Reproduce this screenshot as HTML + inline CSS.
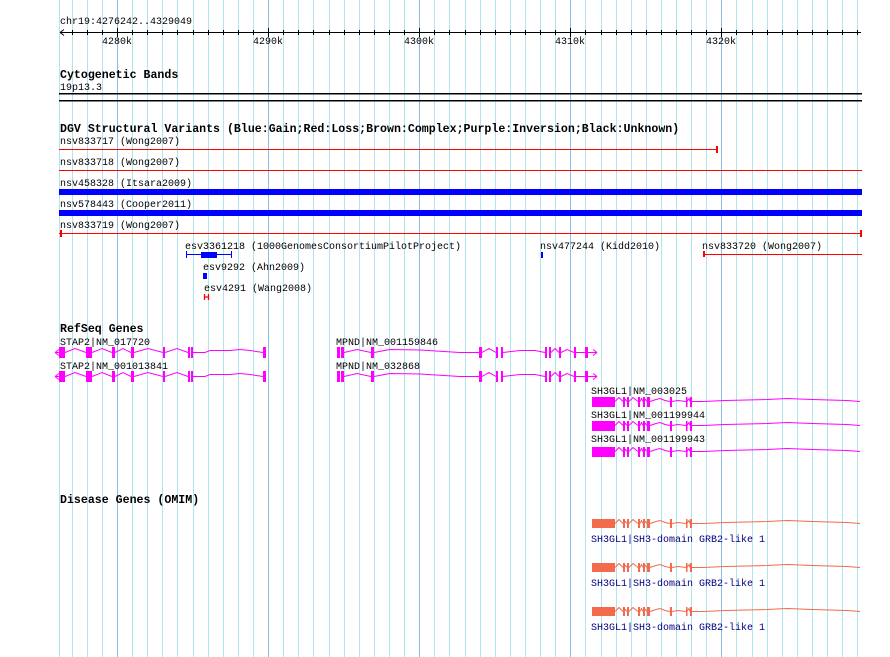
<!DOCTYPE html>
<html><head><meta charset="utf-8"><style>
html,body{margin:0;padding:0;background:#fff;}
svg{display:block}
text{font-family:"Liberation Mono",monospace;font-size:10px;fill:#000}
.b{font-weight:bold;font-size:11.6px}
.n{fill:#000080}
</style></head><body>
<svg width="890" height="657" viewBox="0 0 890 657" xmlns="http://www.w3.org/2000/svg">
<g stroke="#aee6ee" stroke-width="1">
<path d="M59.5 0V657M72.5 0V657M87.5 0V657M102.5 0V657M132.5 0V657M147.5 0V657M162.5 0V657M177.5 0V657M193.5 0V657M208.5 0V657M223.5 0V657M238.5 0V657M253.5 0V657M283.5 0V657M298.5 0V657M313.5 0V657M329.5 0V657M344.5 0V657M359.5 0V657M374.5 0V657M389.5 0V657M404.5 0V657M434.5 0V657M449.5 0V657M465.5 0V657M480.5 0V657M495.5 0V657M510.5 0V657M525.5 0V657M540.5 0V657M555.5 0V657M585.5 0V657M601.5 0V657M616.5 0V657M631.5 0V657M646.5 0V657M661.5 0V657M676.5 0V657M691.5 0V657M706.5 0V657M736.5 0V657M752.5 0V657M767.5 0V657M782.5 0V657M797.5 0V657M812.5 0V657M827.5 0V657M842.5 0V657M857.5 0V657"/>
</g>
<g stroke="#8cbde6" stroke-width="1"><path d="M117.5 0V657M268.5 0V657M419.5 0V657M570.5 0V657M721.5 0V657"/></g>

<text x="60" y="24">chr19:4276242..4329049</text>
<g stroke="#000" stroke-width="1" fill="none">
<path d="M60 32.5H861M60 32.5l4-3M60 32.5l4 3"/>
<path d="M72.5 30V35M87.5 30V35M102.5 30V35M117.5 28V37M132.5 30V35M147.5 30V35M162.5 30V35M177.5 30V35M193.5 30V35M208.5 30V35M223.5 30V35M238.5 30V35M253.5 30V35M268.5 28V37M283.5 30V35M298.5 30V35M313.5 30V35M329.5 30V35M344.5 30V35M359.5 30V35M374.5 30V35M389.5 30V35M404.5 30V35M419.5 28V37M434.5 30V35M449.5 30V35M465.5 30V35M480.5 30V35M495.5 30V35M510.5 30V35M525.5 30V35M540.5 30V35M555.5 30V35M570.5 28V37M585.5 30V35M601.5 30V35M616.5 30V35M631.5 30V35M646.5 30V35M661.5 30V35M676.5 30V35M691.5 30V35M706.5 30V35M721.5 28V37M736.5 30V35M752.5 30V35M767.5 30V35M782.5 30V35M797.5 30V35M812.5 30V35M827.5 30V35M842.5 30V35M857.5 30V35"/>
</g>
<text x="102" y="44">4280k</text><text x="253" y="44">4290k</text><text x="404" y="44">4300k</text><text x="555" y="44">4310k</text><text x="706" y="44">4320k</text>

<text x="60" y="78" class="b">Cytogenetic Bands</text>
<text x="60" y="90">19p13.3</text>
<rect x="59" y="93" width="803" height="1.5" fill="#000"/>
<rect x="59" y="100" width="803" height="1.5" fill="#000"/>

<text x="60" y="132" class="b">DGV Structural Variants (Blue:Gain;Red:Loss;Brown:Complex;Purple:Inversion;Black:Unknown)</text>
<text x="60" y="144">nsv833717 (Wong2007)</text>
<rect x="59" y="149" width="659" height="1" fill="#f00"/><rect x="716" y="146" width="2" height="7" fill="#f00"/>
<text x="60" y="165">nsv833718 (Wong2007)</text>
<rect x="59" y="170" width="803" height="1" fill="#f00"/>
<text x="60" y="186">nsv458328 (Itsara2009)</text>
<rect x="59" y="189" width="803" height="6" fill="#00f"/>
<text x="60" y="207">nsv578443 (Cooper2011)</text>
<rect x="59" y="210" width="803" height="6" fill="#00f"/>
<text x="60" y="228">nsv833719 (Wong2007)</text>
<rect x="59" y="233" width="803" height="1" fill="#f00"/><rect x="60" y="230" width="2" height="7" fill="#f00"/><rect x="860" y="230" width="2" height="7" fill="#f00"/>
<text x="185" y="249">esv3361218 (1000GenomesConsortiumPilotProject)</text>
<rect x="186" y="254" width="46" height="1" fill="#00f"/><rect x="186" y="251" width="1" height="7" fill="#00f"/><rect x="231" y="251" width="1" height="7" fill="#00f"/><rect x="201" y="252" width="16" height="6" fill="#00f"/>
<text x="540" y="249">nsv477244 (Kidd2010)</text>
<rect x="541" y="252" width="2" height="6" fill="#00f"/>
<text x="702" y="249">nsv833720 (Wong2007)</text>
<rect x="703" y="254" width="159" height="1" fill="#f00"/><rect x="703" y="251" width="2" height="6" fill="#f00"/>
<text x="203" y="270">esv9292 (Ahn2009)</text>
<rect x="203" y="273" width="4" height="6" fill="#00f"/>
<text x="204" y="291">esv4291 (Wang2008)</text>
<path d="M204.5 294V300M208.5 294V300M204 297H209" stroke="#f00" stroke-width="1.3"/>

<text x="60" y="332" class="b">RefSeq Genes</text>
<g fill="#f0f" stroke="#f0f">
<text x="60" y="345" style="fill:#000;stroke:none">STAP2|NM_017720</text>
<text x="60" y="369" style="fill:#000;stroke:none">STAP2|NM_001013841</text>
<g id="stap">
<path fill="none" stroke-width="1" d="M55 352.5l4-3M55 352.5l4 3M55 352.5H59M65 352.5L75 348.5L86 352.5M92 352.5L102 348.5L112 352.5M115 352.5L123 348.5L131 352.5M134 352.5L148 348.5L163 352.5M165 352.5L177 348.5L188 352.5M193 352.5L205 352.5L210 350.5L230 350.5L240 349.5L250 350.5L263 352.5"/>
<rect x="59" y="347" width="6" height="11" stroke="none"/><rect x="86" y="347" width="6" height="11" stroke="none"/><rect x="112" y="347" width="3" height="11" stroke="none"/><rect x="131" y="347" width="3" height="11" stroke="none"/><rect x="163" y="347" width="2" height="11" stroke="none"/><rect x="188" y="347" width="2" height="11" stroke="none"/><rect x="191" y="347" width="2" height="11" stroke="none"/><rect x="263" y="347" width="3" height="11" stroke="none"/>
</g>
<use href="#stap" y="24"/>
<text x="336" y="345" style="fill:#000;stroke:none">MPND|NM_001159846</text>
<text x="336" y="369" style="fill:#000;stroke:none">MPND|NM_032868</text>
<g id="mpnd">
<path fill="none" d="M344 352.5L357 349.5L371 352.5M374 352.5L390 349.5L420 350L460 352.5L479 352.5M482 352.5L489 348.5L496 352.5M503 352.5L520 350.5L535 350.5L545 352.5M551 352.5L555 348.5L559 352.5M561 352.5L567 349.5L574 352.5M576 352.5L585 352.5M588 352.5H597M597 352.5l-4-3M597 352.5l-4 3"/>
<rect x="337" y="347" width="3" height="11" stroke="none"/><rect x="341" y="347" width="3" height="11" stroke="none"/><rect x="371" y="347" width="3" height="11" stroke="none"/><rect x="479" y="347" width="3" height="11" stroke="none"/><rect x="496" y="347" width="2" height="11" stroke="none"/><rect x="501" y="347" width="2" height="11" stroke="none"/><rect x="545" y="347" width="2" height="11" stroke="none"/><rect x="549" y="347" width="2" height="11" stroke="none"/><rect x="559" y="347" width="2" height="11" stroke="none"/><rect x="574" y="347" width="2" height="11" stroke="none"/><rect x="585" y="347" width="3" height="11" stroke="none"/>
</g>
<use href="#mpnd" y="24"/>
<rect x="585" y="379" width="2" height="2" stroke="none"/>
<text x="591" y="394" style="fill:#000;stroke:none">SH3GL1|NM_003025</text>
<text x="591" y="418" style="fill:#000;stroke:none">SH3GL1|NM_001199944</text>
<text x="591" y="442" style="fill:#000;stroke:none">SH3GL1|NM_001199943</text>
<g id="sh3">
<path fill="none" d="M615 401.5L619 397.5L623 401.5M629 401.5L633 397.5L638 401.5M650 401.5L656 399.5L660 398.5L665 400.5L670 401.5M672 401.5L678 400.5L686 401.5M687 401.5L689 398.5L690 401.5M692 401.5H703L725 400.5L767 399.5L787 398.5L812 399.5L847 400.5L860 401.5M640 401.5L641.5 398.5L643 401.5M624 401.5L625.5 399.5L627 401.5M644 401.5L645.5 399.5L647 401.5"/>
<rect x="592" y="397" width="23" height="10" stroke="none"/><rect x="623" y="397" width="2" height="10" stroke="none"/><rect x="627" y="397" width="2" height="10" stroke="none"/><rect x="638" y="397" width="2" height="10" stroke="none"/><rect x="643" y="397" width="2" height="10" stroke="none"/><rect x="647" y="397" width="3" height="10" stroke="none"/><rect x="670" y="397" width="2" height="10" stroke="none"/><rect x="686" y="397" width="1.5" height="10" stroke="none"/><rect x="690" y="397" width="2" height="10" stroke="none"/>
</g>
<use href="#sh3" y="24"/>
<use href="#sh3" y="50"/>
</g>

<text x="60" y="503" class="b">Disease Genes (OMIM)</text>
<g fill="#f36a4c" stroke="#f36a4c">
<g id="om">
<path fill="none" d="M615 523.5L619 519.5L623 523.5M629 523.5L633 519.5L638 523.5M650 523.5L656 521.5L660 520.5L665 522.5L670 523.5M672 523.5L678 522.5L686 523.5M687 523.5L689 520.5L690 523.5M692 523.5H703L725 522.5L767 521.5L787 520.5L812 521.5L847 522.5L860 523.5M640 523.5L641.5 520.5L643 523.5M624 523.5L625.5 521.5L627 523.5M644 523.5L645.5 521.5L647 523.5"/>
<rect x="592" y="519" width="23" height="9" stroke="none"/><rect x="623" y="519" width="2" height="9" stroke="none"/><rect x="627" y="519" width="2" height="9" stroke="none"/><rect x="638" y="519" width="2" height="9" stroke="none"/><rect x="643" y="519" width="2" height="9" stroke="none"/><rect x="647" y="519" width="3" height="9" stroke="none"/><rect x="670" y="519" width="2" height="9" stroke="none"/><rect x="686" y="519" width="1.5" height="9" stroke="none"/><rect x="690" y="519" width="2" height="9" stroke="none"/>
</g>
<use href="#om" y="44"/>
<use href="#om" y="88"/>
</g>
<text x="591" y="542" class="n">SH3GL1|SH3-domain GRB2-like 1</text>
<text x="591" y="586" class="n">SH3GL1|SH3-domain GRB2-like 1</text>
<text x="591" y="630" class="n">SH3GL1|SH3-domain GRB2-like 1</text>
</svg>
</body></html>
